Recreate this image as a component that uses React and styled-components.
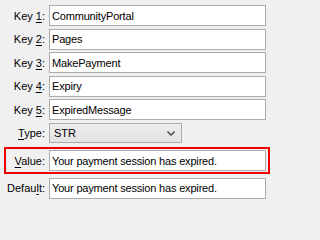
import React from "react";
import styled, { createGlobalStyle } from "styled-components";

const GlobalStyle = createGlobalStyle`
  html, body {
    margin: 0;
    padding: 0;
    background: #f0f0f0;
  }
  body {
    font-family: "Liberation Sans", Arial, sans-serif;
    font-size: 11px;
    color: #000;
  }
`;

const keys = [
  { key: "1", value: "CommunityPortal" },
  { key: "2", value: "Pages" },
  { key: "3", value: "MakePayment" },
  { key: "4", value: "Expiry" },
  { key: "5", value: "ExpiredMessage" },
];

const message = "Your payment session has expired.";

const App = () => {
  return (
    <>
      <GlobalStyle />
      <Form>
        {keys.map((k) => (
          <Row key={k.key}>
            <Label>
              Key <u>{k.key}</u>:
            </Label>
            <TextBox readOnly value={k.value} />
          </Row>
        ))}
        <Row>
          <Label>
            <u>T</u>ype:
          </Label>
          <Combo>
            <ComboText>STR</ComboText>
            <Chevron viewBox="0 0 8 5">
              <path d="M0.5 0.5 L4 4 L7.5 0.5" />
            </Chevron>
          </Combo>
        </Row>
        <Highlight>
          <Row $inset>
            <Label>
              <u>V</u>alue:
            </Label>
            <TextBox readOnly value={message} />
          </Row>
        </Highlight>
        <Row>
          <Label>
            Defau<u>l</u>t:
          </Label>
          <TextBox readOnly value={message} />
        </Row>
      </Form>
    </>
  );
};

const Form = styled.div`
  width: 271px;
  height: 202px;
  box-sizing: border-box;
  padding: 5px 5px 0 0;
  display: flex;
  flex-direction: column;
  gap: 2.5px;
`;

const Row = styled.div`
  display: grid;
  grid-template-columns: ${(p) => (p.$inset ? "39px" : "45px")} 1fr;
  column-gap: 4px;
  align-items: center;
  height: 21px;
`;

const Label = styled.label`
  text-align: right;
  white-space: nowrap;
  font-size: 11px;
  color: #000;

  u {
    text-decoration-thickness: 1px;
    text-underline-offset: 2px;
  }
`;

const TextBox = styled.input`
  box-sizing: border-box;
  width: 100%;
  height: 21px;
  margin: 0;
  padding: 0 2px;
  border: 1px solid #acacac;
  background: #fff;
  font-family: "Liberation Sans", Arial, sans-serif;
  font-size: 11px;
  letter-spacing: -0.18px;
  color: #000;
  outline: none;
`;

const Combo = styled.div`
  box-sizing: border-box;
  width: 133px;
  height: 20px;
  border: 1px solid #acacac;
  background: linear-gradient(#ececec, #e4e4e4);
  display: flex;
  align-items: center;
  justify-content: space-between;
  padding: 0 6px 0 4px;
`;

const ComboText = styled.span`
  font-size: 11px;
  color: #000;
`;

const Chevron = styled.svg`
  width: 8px;
  height: 5px;
  fill: none;
  stroke: #555;
  stroke-width: 1.6;
`;

const Highlight = styled.div`
  margin: 1px 0 1px 4px;
  width: 266px;
  box-sizing: border-box;
  border: 2px solid #ee0000;
  padding: 1px 2px 1px 0;
`;

export default App;
